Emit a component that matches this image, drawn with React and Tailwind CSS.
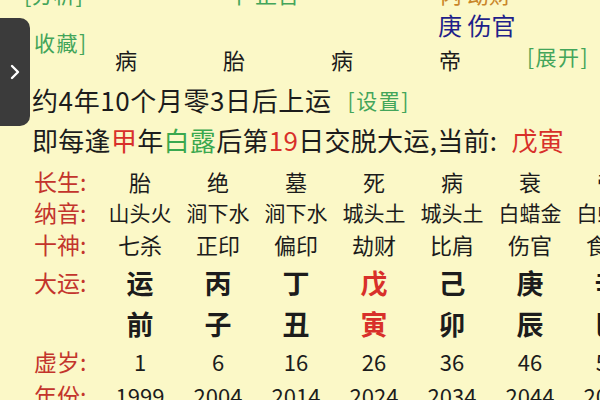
import React from "react";

const cols = [
  { cs: "胎", ny: "山头火", ss: "七杀", g: "运", z: "前", age: "1", yr: "1999" },
  { cs: "绝", ny: "涧下水", ss: "正印", g: "丙", z: "子", age: "6", yr: "2004" },
  { cs: "墓", ny: "涧下水", ss: "偏印", g: "丁", z: "丑", age: "16", yr: "2014" },
  { cs: "死", ny: "城头土", ss: "劫财", g: "戊", z: "寅", age: "26", yr: "2024", red: true },
  { cs: "病", ny: "城头土", ss: "比肩", g: "己", z: "卯", age: "36", yr: "2034" },
  { cs: "衰", ny: "白蜡金", ss: "伤官", g: "庚", z: "辰", age: "46", yr: "2044" },
  { cs: "帝", ny: "白蜡金", ss: "食神", g: "辛", z: "巳", age: "56", yr: "2054" },
];

function Row({ label, h, children }) {
  return (
    <div className={`flex items-center pl-[34px] ${h}`}>
      <div className="w-[67px] shrink-0 text-[23px] leading-none text-[#c3342c] whitespace-nowrap">{label}</div>
      {children}
    </div>
  );
}

function Cell({ children, cls = "" }) {
  return <div className={`w-[78px] shrink-0 text-center whitespace-nowrap leading-none ${cls}`}>{children}</div>;
}

export default function App() {
  return (
    <div
      className="relative w-[600px] h-[400px] overflow-hidden bg-[#fbf8c7] text-[#1c1c1c]"
      style={{ fontFamily: '"Noto Sans CJK SC", "Noto Sans", sans-serif' }}
    >
      <div className="flex flex-col">
        {/* cut-off top row */}
        <div className="flex h-[22px] -mt-[18px] text-[22px] leading-[22px] whitespace-nowrap">
          <div className="ml-[24px] w-[176px] text-[#43a55a]">[分析]</div>
          <div className="ml-[28px] w-[212px] text-[#43a55a]">甲 正官</div>
          <div className="text-[#c9862a]">丙 劫财</div>
        </div>
        {/* row B */}
        <div className="flex items-start h-[44px] pl-[34px] whitespace-nowrap">
          <div className="w-[404px] mt-[26px] text-[21px] leading-[24px] tracking-[1.5px] text-[#43a55a]">收藏]</div>
          <div className="mt-[7px] text-[24px] leading-[28px] text-[#1f1f8a]">庚 伤官</div>
        </div>
        {/* row C */}
        <div className="flex items-center h-[22px] pl-[72px] whitespace-nowrap">
          <div className="w-[108px] text-center text-[22px] leading-none">病</div>
          <div className="w-[108px] text-center text-[22px] leading-none">胎</div>
          <div className="w-[108px] text-center text-[22px] leading-none">病</div>
          <div className="w-[108px] text-center text-[22px] leading-none">帝</div>
          <div className="ml-[23px] -mt-[6px] text-[21px] leading-none tracking-[1.5px] text-[#43a55a]">[展开]</div>
        </div>
        {/* row D */}
        <div className="flex items-center h-[40px] mt-[10px] pl-[32px] whitespace-nowrap">
          <span className="text-[26px] leading-none tracking-[0.6px]">约4年10个月零3日后上运</span>
          <span className="ml-[16px] text-[21px] leading-none tracking-[1.5px] text-[#43a55a]">[设置]</span>
        </div>
        {/* row E */}
        <div className="flex items-center h-[40px] pl-[32px] whitespace-nowrap text-[26px] leading-none tracking-[0.3px]">
          <span>即每逢</span>
          <span className="text-[#d8302a]">甲</span>
          <span>年</span>
          <span className="text-[#3aa84f]">白露</span>
          <span>后第</span>
          <span className="text-[#d8302a]">19</span>
          <span>日交脱大运,当前:</span>
          <span className="ml-[14px] text-[#d8302a]">戊寅</span>
        </div>
        <div className="h-[6px]" />
        <Row label="长生:" h="h-[30px]">
          {cols.map((c, i) => (
            <Cell key={i} cls="text-[22px]">{c.cs}</Cell>
          ))}
        </Row>
        <Row label="纳音:" h="h-[32px]">
          {cols.map((c, i) => (
            <Cell key={i} cls="text-[21px]">{c.ny}</Cell>
          ))}
        </Row>
        <Row label="十神:" h="h-[32px]">
          {cols.map((c, i) => (
            <Cell key={i} cls="text-[22px]">{c.ss}</Cell>
          ))}
        </Row>
        <Row label="大运:" h="h-[44px]">
          {cols.map((c, i) => (
            <Cell key={i} cls={`text-[27px] font-bold ${c.red ? "text-[#d8302a]" : ""}`}>{c.g}</Cell>
          ))}
        </Row>
        <Row label="" h="h-[38px]">
          {cols.map((c, i) => (
            <Cell key={i} cls={`text-[27px] font-bold ${c.red ? "text-[#d8302a]" : ""}`}>{c.z}</Cell>
          ))}
        </Row>
        <Row label="虚岁:" h="h-[38px]">
          {cols.map((c, i) => (
            <Cell key={i} cls="text-[22px]">{c.age}</Cell>
          ))}
        </Row>
        <Row label="年份:" h="h-[30px]">
          {cols.map((c, i) => (
            <Cell key={i} cls="text-[22px]">{c.yr}</Cell>
          ))}
        </Row>
      </div>
      {/* side tab overlay */}
      <div className="absolute left-0 top-[18px] w-[30px] h-[108px] rounded-r-[10px] bg-[#3b3b3b] flex items-center justify-center">
        <svg width="12" height="16" viewBox="0 0 12 16" fill="none">
          <path d="M3 2 L9 8 L3 14" stroke="#ffffff" strokeWidth="2.4" strokeLinecap="round" strokeLinejoin="round" />
        </svg>
      </div>
    </div>
  );
}
